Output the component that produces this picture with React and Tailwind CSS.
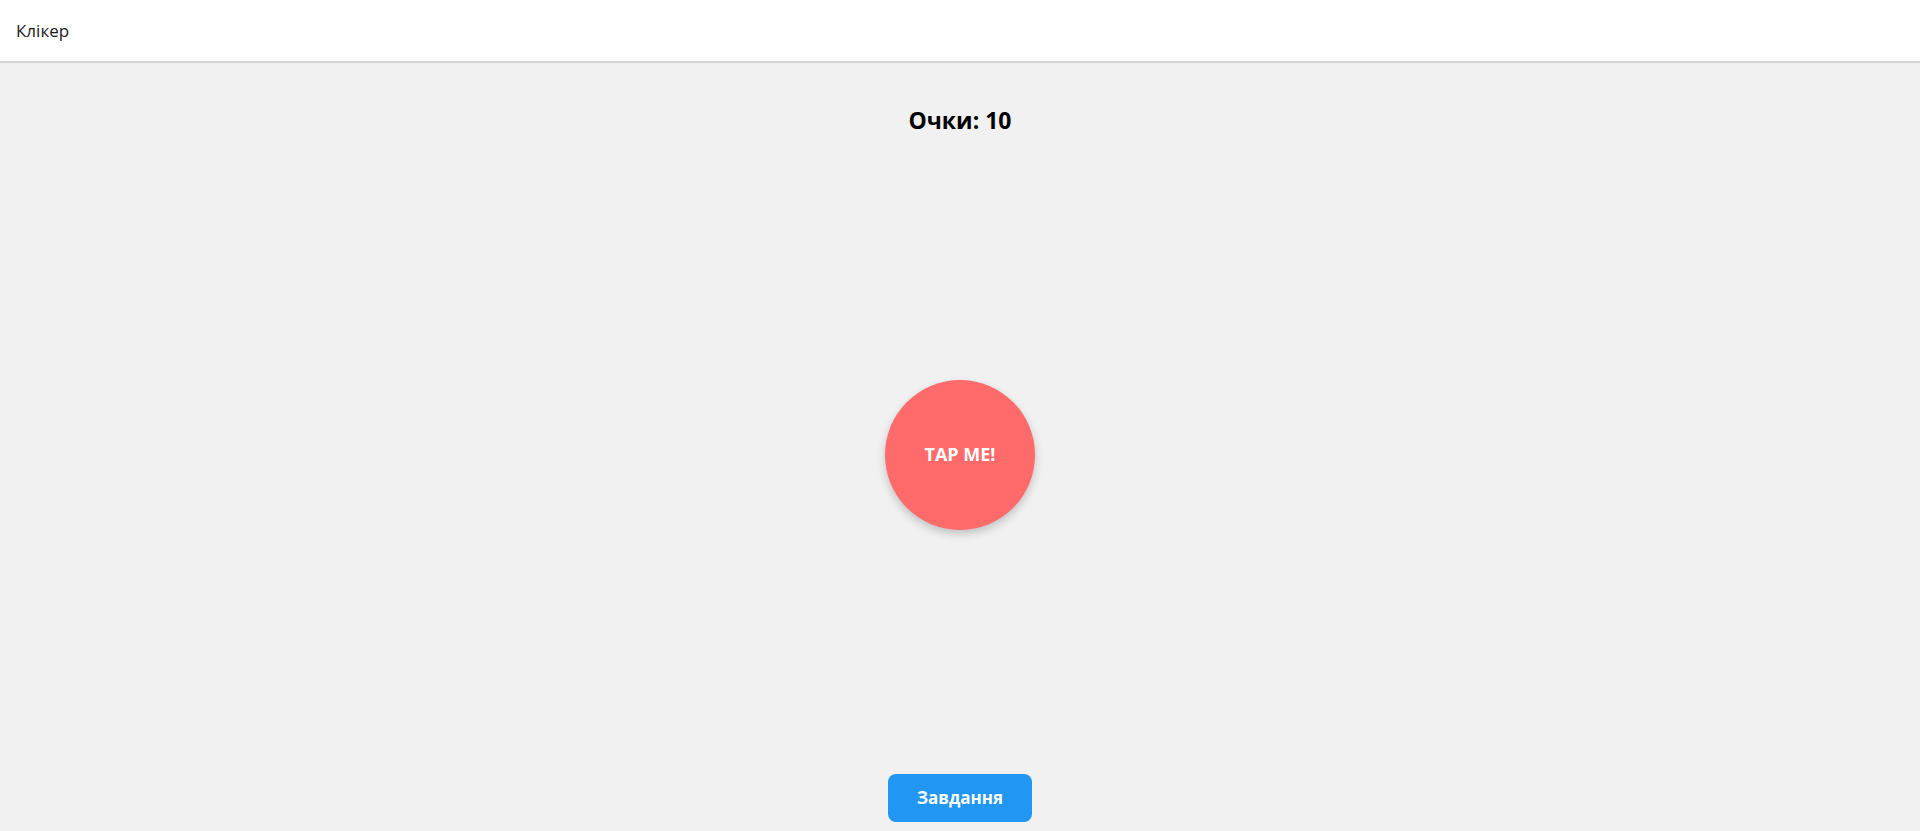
export default function App() {
  return (
    <div className="w-[1920px] h-[831px] flex flex-col bg-[#f1f1f1]" style={{ fontFamily: '"Open Sans", "Noto Sans", sans-serif' }}>
      <header className="h-[63px] shrink-0 bg-white border-b-2 border-[#d6d6d6] flex items-center px-4">
        <span className="text-[17px] text-[#1a1a1a]">Клікер</span>
      </header>
      <main className="flex-1 flex flex-col items-center">
        <h2 className="mt-[46px] text-[23px] leading-none font-bold text-black">Очки: 10</h2>
        <div className="flex-1 flex items-center justify-center pt-[3px]">
          <button className="w-[150px] h-[150px] rounded-full bg-[#ff6b6b] text-white font-bold text-[18px] shadow-[0_4px_8px_rgba(0,0,0,0.2)]">
            TAP ME!
          </button>
        </div>
        <button className="mb-[9px] w-[144px] h-[48px] rounded-lg bg-[#2196f3] text-white font-bold text-[17px]">
          Завдання
        </button>
      </main>
    </div>
  );
}
